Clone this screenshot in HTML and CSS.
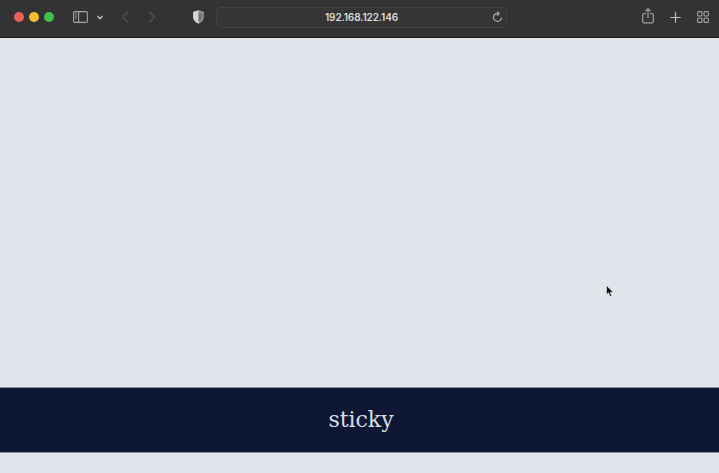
FILE: index.html
```html
<!DOCTYPE html>
<html lang="en">
<head>
    <meta charset="UTF-8">
    <title>sticky</title>
    <link rel="stylesheet" href="styles.css">
</head>
<body>
    <header class="toolbar">
        <div class="lights">
            <span class="light red"></span>
            <span class="light yellow"></span>
            <span class="light green"></span>
        </div>
        <svg class="icon sidebar-icon" width="15" height="12" viewBox="0 0 15 12" fill="none" stroke="#a6a6a6" stroke-width="1.1">
            <rect x="0.6" y="0.6" width="13.8" height="10.8" rx="1.4"/>
            <path d="M5.6 0.6V11.4"/>
            <path d="M1.9 3H3.9M1.9 5H3.9M1.9 7H3.9" stroke-width="0.9"/>
        </svg>
        <svg class="icon chevron-icon" width="6" height="5" viewBox="0 0 6 5" fill="none" stroke="#c4c4c4" stroke-width="1.4">
            <path d="M0.6 1L3 3.6L5.4 1"/>
        </svg>
        <svg class="icon back-icon" width="8" height="12" viewBox="0 0 8 12" fill="none" stroke="#525252" stroke-width="1.2">
            <path d="M7 0.8L1.4 6L7 11.2"/>
        </svg>
        <svg class="icon forward-icon" width="8" height="12" viewBox="0 0 8 12" fill="none" stroke="#525252" stroke-width="1.2">
            <path d="M1 0.8L6.6 6L1 11.2"/>
        </svg>
        <svg class="icon shield-icon" width="11" height="14" viewBox="0 0 11 14">
            <path d="M5.5 0.3L10.8 2V7C10.8 10.2 8.4 12.4 5.5 13.7C2.6 12.4 0.2 10.2 0.2 7V2Z" fill="#9c9c9c"/>
            <path d="M5.5 0.3L0.2 2V7C0.2 10.2 2.6 12.4 5.5 13.7Z" fill="#d6d6d6"/>
            <path d="M5.5 2L9.5 3.1V7C9.5 9.3 7.8 11 5.5 12.1Z" fill="#777777"/>
        </svg>
        <div class="address">
            <span class="url">192.168.122.146</span>
            <svg class="reload-icon" width="11" height="12" viewBox="0 0 11 12" fill="none" stroke="#a8a8a8" stroke-width="1.2">
                <path d="M6.8 2.6A4 4 0 1 0 9.5 6.4"/>
                <path d="M5 0.6L7.2 2.6L5 4.6"/>
            </svg>
        </div>
        <svg class="icon share-icon" width="12" height="16" viewBox="0 0 12 16" fill="none" stroke="#a3a3a3" stroke-width="1.2">
            <path d="M3.8 5.6H2.2C1.3 5.6 0.7 6.2 0.7 7.1V13.4C0.7 14.3 1.3 14.9 2.2 14.9H9.8C10.7 14.9 11.3 14.3 11.3 13.4V7.1C11.3 6.2 10.7 5.6 9.8 5.6H8.2"/>
            <path d="M6 10V1M3.6 3.2L6 0.9L8.4 3.2"/>
        </svg>
        <svg class="icon plus-icon" width="11" height="11" viewBox="0 0 11 11" fill="none" stroke="#c2c2c2" stroke-width="1.2">
            <path d="M5.5 0.3V10.7M0.3 5.5H10.7"/>
        </svg>
        <svg class="icon tabs-icon" width="12" height="12" viewBox="0 0 12 12" fill="none" stroke="#a0a0a0" stroke-width="1.1">
            <rect x="0.6" y="0.6" width="4.4" height="4.4" rx="1"/>
            <rect x="7" y="0.6" width="4.4" height="4.4" rx="1"/>
            <rect x="0.6" y="7" width="4.4" height="4.4" rx="1"/>
            <rect x="7" y="7" width="4.4" height="4.4" rx="1"/>
        </svg>
    </header>

    <main class="page">
        <div class="sticky-bar">sticky</div>
        <svg class="cursor" width="8" height="13" viewBox="0 0 8 13">
            <path d="M0.5 0.5V9.6L2.6 7.8L4.2 11.6L5.8 10.9L4.2 7.3H7.2Z" fill="#111" stroke="#eee" stroke-width="0.6"/>
        </svg>
    </main>
</body>
</html>
```
FILE: styles.css
```css
html, body {
    margin: 0;
    height: 100%;
}
body {
    display: flex;
    flex-direction: column;
    overflow: hidden;
    background-color: #e1e5ec;
}
.toolbar {
    display: flex;
    align-items: center;
    flex: 0 0 34px;
    height: 34px;
    padding-bottom: 3px;
    background-color: #333333;
    border-bottom: 1px solid #1e1e1e;
}
.lights {
    display: flex;
    gap: 5px;
    margin-left: 14px;
}
.light {
    width: 10px;
    height: 10px;
    border-radius: 50%;
}
.red { background-color: #ec5f57; }
.yellow { background-color: #f5bd30; }
.green { background-color: #3fc24d; }
.icon {
    flex: none;
}
.sidebar-icon { margin-left: 19px; }
.chevron-icon { margin-left: 9px; }
.back-icon { margin-left: 18px; }
.forward-icon { margin-left: 19px; }
.shield-icon { margin-left: 37px; }
.address {
    display: flex;
    align-items: center;
    justify-content: center;
    position: relative;
    flex: none;
    width: 289px;
    height: 19px;
    margin-left: 12px;
    border: 1px solid #424242;
    border-radius: 5px;
    background-color: #353535;
}
.url {
    font-family: "Inter", "Liberation Sans", sans-serif;
    font-size: 10px;
    font-weight: 600;
    letter-spacing: -0.1px;
    color: #dcdcdc;
}
.reload-icon {
    position: absolute;
    right: 3px;
    top: 3px;
}
.share-icon { margin-left: 135px; margin-top: -2px; }
.plus-icon { margin-left: 16px; }
.tabs-icon { margin-left: 16px; }
.page {
    flex: 1;
    display: flex;
    flex-direction: column;
    position: relative;
}
.sticky-bar {
    height: 64px;
    margin-top: 349px;
    padding-left: 3px;
    line-height: 64px;
    text-align: center;
    font-family: "DejaVu Serif", "Liberation Serif", serif;
    font-size: 22px;
    color: #d9dde6;
    background-color: #0e1733;
    border-top: 1px solid #878b9a;
    border-bottom: 1px solid #878b9a;
}
.cursor {
    position: absolute;
    left: 606px;
    top: 247px;
}
```
